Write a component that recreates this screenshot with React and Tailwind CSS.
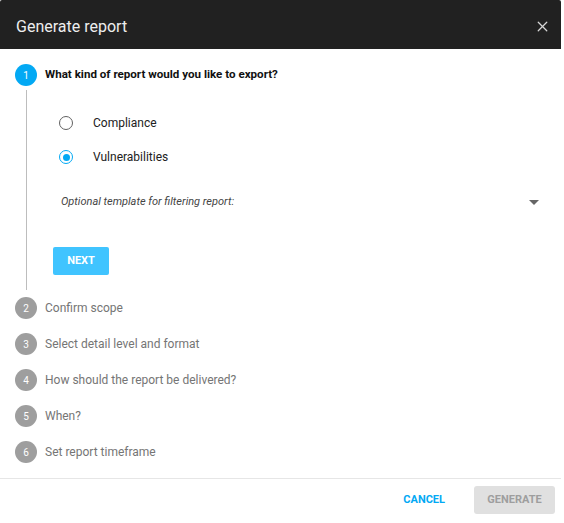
import { X } from "lucide-react"

const steps = [
    { n: 2, label: "Confirm scope" },
    { n: 3, label: "Select detail level and format" },
    { n: 4, label: "How should the report be delivered?" },
    { n: 5, label: "When?" },
    { n: 6, label: "Set report timeframe" },
]

function StepCircle({ n, active }) {
    return (
        <div
            className={
                "flex h-[22px] w-[22px] shrink-0 items-center justify-center rounded-full text-[10px] text-white " +
                (active ? "bg-[#03a9f4]" : "bg-[#9e9e9e]")
            }
        >
            {n}
        </div>
    )
}

function Radio({ checked, label }) {
    return (
        <div className="flex h-[20px] items-center">
            <div
                className={
                    "flex h-[14px] w-[14px] items-center justify-center rounded-full border-[1.5px] " +
                    (checked ? "border-[#03a9f4]" : "border-[#616161]")
                }
            >
                {checked && <div className="h-[7px] w-[7px] rounded-full bg-[#03a9f4]" />}
            </div>
            <span className="ml-[20px] text-[12px] text-[#212121]">{label}</span>
        </div>
    )
}

export default function App() {
    return (
        <div className="h-[523px] w-[564px] bg-white font-['Roboto',sans-serif]">
            <div className="flex h-full w-[561px] flex-col">
                <div className="flex h-[49px] items-center justify-between rounded-t-[2px] bg-[#212121] pl-[16px] pr-[10px] pt-[4px]">
                    <span className="text-[16px] text-[#eeeeee]">Generate report</span>
                    <X className="h-[17px] w-[17px] text-[#d6d6d6]" strokeWidth={1.75} />
                </div>

                <div className="flex-1 px-[15px] pt-[15px]">
                    <div className="flex h-[22px] items-center gap-[8px]">
                        <StepCircle n={1} active />
                        <span className="text-[11.6px] font-bold text-[#111]">What kind of report would you like to export?</span>
                    </div>

                    <div className="ml-[11px] mt-[4px] border-l border-[#bdbdbd] pb-[15px] pl-[32px] pt-[23px]">
                        <div className="flex flex-col gap-[14px]">
                            <Radio label="Compliance" />
                            <Radio checked label="Vulnerabilities" />
                        </div>
                        <div className="mt-[25px] flex h-[20px] items-center justify-between pl-[2px] pr-[7px]">
                            <span className="text-[11px] italic text-[#444]">Optional template for filtering report:</span>
                            <div className="h-0 w-0 border-x-[5px] border-t-[5px] border-x-transparent border-t-[#666]" />
                        </div>
                        <button className="-ml-[6px] mt-[35px] flex h-[28px] w-[56px] items-center justify-center rounded-[2px] bg-[#40c4ff] text-[11px] font-bold text-white">
                            NEXT
                        </button>
                    </div>

                    <div className="mt-[7px] flex flex-col gap-[14px]">
                        {steps.map((s) => (
                            <div key={s.n} className="flex h-[22px] items-center gap-[8px]">
                                <StepCircle n={s.n} />
                                <span className="text-[12px] text-[#757575]">{s.label}</span>
                            </div>
                        ))}
                    </div>
                </div>

                <div className="flex h-[45px] items-start justify-end gap-[13px] border-t border-[#e6e6e6] pr-[6px] pt-[7px]">
                    <button className="flex h-[28px] items-center px-[16px] text-[11px] font-bold text-[#03a9f4]">CANCEL</button>
                    <button className="flex h-[28px] w-[81px] items-center justify-center rounded-[3px] bg-[#e0e0e0] text-[11px] font-bold text-[#9e9e9e]">
                        GENERATE
                    </button>
                </div>
            </div>
        </div>
    )
}
